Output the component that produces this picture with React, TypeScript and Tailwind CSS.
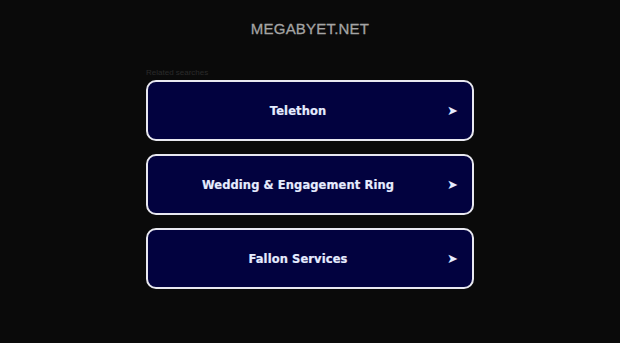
import React from "react";

const items = ["Telethon", "Wedding & Engagement Ring", "Fallon Services"];

export default function App() {
  return (
    <div className="w-[620px] h-[343px] bg-[#0a0a0a] overflow-hidden flex flex-col items-center">
      <div className="mt-[19px] h-[20px] text-[15px] leading-[20px] text-[#a4a4a4] tracking-[0.2px] font-['Liberation_Sans',sans-serif] [-webkit-text-stroke:0.3px_#a4a4a4]">
        MEGABYET.NET
      </div>
      <div className="mt-[29px] w-[328px] flex flex-col">
        <div className="text-[8px] leading-[10px] text-[#2a2a2a] font-['Liberation_Sans',sans-serif] mb-[2px]">
          Related searches
        </div>
        <div className="flex flex-col gap-[13px]">
          {items.map((t) => (
            <div
              key={t}
              className="relative h-[61px] rounded-[10px] border-2 border-[#e8e8f0] bg-[#02023f] flex items-center justify-center pr-[24px] pt-[2px]"
            >
              <span className="text-[11.5px] tracking-[0.1px] font-bold text-[#e6ecff] font-['DejaVu_Sans',sans-serif] [-webkit-text-stroke:0.2px_#e6ecff]">
                {t}
              </span>
              <span className="absolute right-[14px] top-1/2 -translate-y-1/2 text-[13px] text-[#e6ecff] font-['DejaVu_Sans',sans-serif]">
                ➤
              </span>
            </div>
          ))}
        </div>
      </div>
    </div>
  );
}
